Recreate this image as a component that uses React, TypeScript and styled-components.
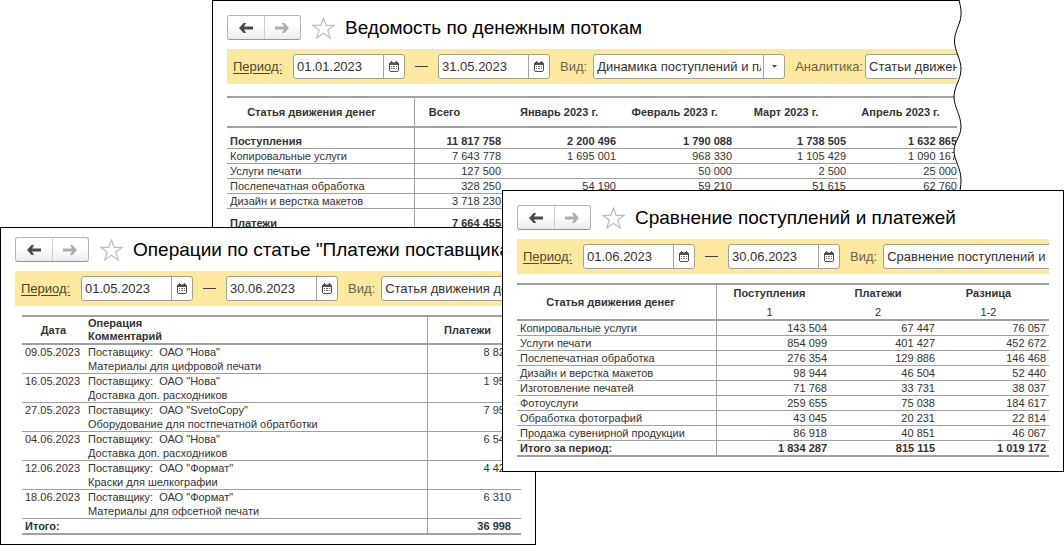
import React from "react";
import styled, { createGlobalStyle, css } from "styled-components";

const GlobalStyle = createGlobalStyle`
  *, *::before, *::after { box-sizing: border-box; }
  body {
    margin: 0;
    background: #fff;
    color: #333;
    font-family: "Liberation Sans", Arial, sans-serif;
    font-size: 11px;
  }
`;

const Desktop = styled.main`
  position: relative;
  min-height: 100vh;
  overflow: hidden;
`;

const Panel = styled.section<{ $compact?: boolean }>`
  position: absolute;
  background: #fff;
  border: 1px solid #000;
  padding: ${(p) => (p.$compact ? "9px 14px" : "14px")};
`;

const FlowPanel = styled(Panel)`
  top: 0;
  left: 212px;
  right: 103px;
  border-width: 1px 0 0 1px;
  padding-right: 4px;
`;

const OperationsPanel = styled(Panel)`
  top: 227px;
  left: 0;
  width: 536px;
`;

const ComparePanel = styled(Panel)`
  top: 190px;
  left: 502px;
  right: 0;
`;

const TornEdge = styled.svg`
  position: absolute;
  top: -1px;
  right: -1px;
`;

const TitleBar = styled.header`
  display: flex;
  align-items: center;
  height: 25px;
  margin-bottom: 9px;
  white-space: nowrap;
  overflow: hidden;
`;

const NavGroup = styled.div`
  display: flex;
  flex: none;
  width: 74px;
  height: 25px;
  border: 1px solid #b5b5b5;
  border-bottom-color: #959595;
  border-radius: 3px;
  background: linear-gradient(#fff 40%, #ececec);
`;

const NavButton = styled.button`
  display: flex;
  flex: 1;
  align-items: center;
  justify-content: center;
  padding: 0;
  border: 0;
  background: none;
  color: #4a4a4a;

  & + & {
    border-left: 1px solid #cfcfcf;
    color: #adadad;
  }
`;

const StarButton = styled.button`
  display: flex;
  flex: none;
  margin: 0 10px 0 11px;
  padding: 0;
  border: 0;
  background: none;
`;

const Title = styled.h1`
  margin: 0;
  color: #000;
  font-size: 19px;
  line-height: 25px;
  font-weight: 400;
`;

const FilterBar = styled.div<{ $gap: number }>`
  display: flex;
  align-items: center;
  gap: 10px;
  height: 35px;
  margin-bottom: ${(p) => p.$gap}px;
  padding-left: 6px;
  background: #fce99f;
  font-size: 13px;
  white-space: nowrap;
  overflow: hidden;
`;

const PeriodLink = styled.a`
  flex: none;
  width: 50px;
  color: #4d4632;
  text-decoration: underline;
  text-underline-offset: 2px;
`;

const FieldGroup = styled.div<{ $tight?: boolean }>`
  display: flex;
  flex: none;
  align-items: center;
  gap: ${(p) => (p.$tight ? 2 : 6)}px;
`;

const FieldLabel = styled.label`
  color: #6b6448;
`;

const Box = styled.div<{ $wide?: boolean }>`
  display: flex;
  flex: none;
  width: ${(p) => (p.$wide ? 192 : 112)}px;
  height: 25px;
  border: 1px solid #a3a08f;
  border-radius: 3px;
  background: #fff;
  overflow: hidden;
`;

const control = css`
  flex: 1;
  min-width: 0;
  padding: 0 0 0 3px;
  border: 0;
  outline: 0;
  background: none;
  color: #333;
  font: 13px "Liberation Sans", Arial, sans-serif;
`;

const DateInput = styled.input`
  ${control}
`;

const Select = styled.select`
  ${control}
  margin-right: 2px;
  appearance: none;
  text-overflow: clip;
`;

const BoxButton = styled.button`
  display: flex;
  flex: none;
  align-items: center;
  justify-content: center;
  width: 21px;
  padding: 0;
  border: 0;
  border-left: 1px solid #a3a3a3;
  background: none;
  color: #505050;
`;

const Dash = styled.span`
  flex: none;
  width: 13px;
  height: 1px;
  background: #444;
`;

const Table = styled.table`
  width: 100%;
  table-layout: fixed;
  border-collapse: separate;
  border-spacing: 0;
  border-top: 2px solid #a0a0a0;
  line-height: 14px;
  white-space: nowrap;
`;

const InsetTable = styled(Table)`
  width: calc(100% - 7px);
  margin-left: 7px;

  thead {
    line-height: 13px;
  }
`;

const Head = styled.th<{ $shift?: number; $left?: boolean; $rule?: boolean; $height?: number }>`
  height: ${(p) => p.$height ?? 28}px;
  padding: 0 ${(p) => p.$shift ?? 0}px 0 ${(p) => (p.$left ? 3 : 0)}px;
  border-bottom: 2px solid #a0a0a0;
  border-right: ${(p) => (p.$rule ? "1px solid #a0a0a0" : "0")};
  text-align: ${(p) => (p.$left ? "left" : "center")};
`;

const SubHead = styled.span`
  display: block;
  margin-top: 5px;
  font-weight: 400;
`;

const Row = styled.tr<{ $bold?: boolean; $last?: boolean; $space?: number }>`
  font-weight: ${(p) => (p.$bold ? 700 : 400)};

  td {
    padding-top: ${(p) => p.$space ?? 0}px;
    border-bottom: ${(p) => (p.$last ? 2 : 1)}px solid #a0a0a0;
  }
`;

const Cell = styled.td<{ $rule?: boolean }>`
  padding: 0 3px;
  vertical-align: top;
  border-right: ${(p) => (p.$rule ? "1px solid #a0a0a0" : "0")};
`;

const NumberCell = styled.td<{ $pad?: number }>`
  padding: 0 ${(p) => p.$pad ?? 3}px 0 0;
  vertical-align: top;
  text-align: right;
`;

const Supplier = styled.span`
  display: block;
  white-space: pre;
`;

function Arrow({ forward }: { forward?: boolean }) {
  return (
    <svg width="14" height="10" viewBox="0 0 14 10" aria-hidden="true">
      <path
        transform={forward ? "rotate(180 7 5)" : undefined}
        d="M0 5 4.600 0H7.200L5 3.600H14V6.400H5L7.200 10H4.600Z"
        fill="currentColor"
      />
    </svg>
  );
}

function Calendar() {
  return (
    <svg width="10" height="11" viewBox="0 0 10 11" aria-hidden="true">
      <path d="M1 1h8v1h1v8H9v1H1v-1H0V2h1Z" fill="currentColor" />
      <path d="M1 4h8v6H1Z" fill="#fff" />
      <path d="M2 0h1v2H2ZM7 0h1v2H7Z" fill="currentColor" />
      <path d="M4 1h2v1H4Z" fill="#fff" opacity=".5" />
      <path
        d="M2 5h1v1H2ZM4 5h2v1H4ZM7 5h1v1H7ZM2 7h1v1H2ZM4 7h2v1H4ZM7 7h1v1H7Z"
        fill="currentColor"
        opacity=".8"
      />
    </svg>
  );
}

function Heading({ children }: { children: React.ReactNode }) {
  return (
    <TitleBar>
      <NavGroup>
        <NavButton type="button" aria-label="Назад">
          <Arrow />
        </NavButton>
        <NavButton type="button" aria-label="Вперед">
          <Arrow forward />
        </NavButton>
      </NavGroup>
      <StarButton type="button" aria-label="В избранное">
        <svg width="23" height="22" viewBox="0 0 23 22" aria-hidden="true">
          <path
            d="M11.5 1 14.2 8.3H22.3L15.8 13 18.2 21 11.5 16.2 4.8 21 7.2 13 0.7 8.3H8.8Z"
            fill="#fff"
            stroke="#b9bec4"
            strokeWidth="1.2"
          />
        </svg>
      </StarButton>
      <Title>{children}</Title>
    </TitleBar>
  );
}

function DateField({ label, value }: { label: string; value: string }) {
  return (
    <Box>
      <DateInput type="text" aria-label={label} defaultValue={value} />
      <BoxButton type="button" aria-label="Выбрать дату">
        <Calendar />
      </BoxButton>
    </Box>
  );
}

interface SelectFieldProps {
  id: string;
  label: string;
  value: string;
  tight?: boolean;
}

function SelectField({ id, label, value, tight }: SelectFieldProps) {
  return (
    <FieldGroup $tight={tight}>
      <FieldLabel htmlFor={id}>{label}</FieldLabel>
      <Box $wide>
        <Select id={id} defaultValue={value}>
          <option>{value}</option>
        </Select>
        <BoxButton type="button" aria-label="Открыть список">
          <svg width="5" height="3" viewBox="0 0 5 3" aria-hidden="true">
            <path d="M0 0h5L2.5 3Z" fill="currentColor" />
          </svg>
        </BoxButton>
      </Box>
    </FieldGroup>
  );
}

interface FiltersProps {
  from: string;
  to: string;
  gap: number;
  children: React.ReactNode;
}

function Filters({ from, to, gap, children }: FiltersProps) {
  return (
    <FilterBar $gap={gap}>
      <PeriodLink href="#period">Период:</PeriodLink>
      <DateField label="Начало периода" value={from} />
      <Dash />
      <DateField label="Конец периода" value={to} />
      {children}
    </FilterBar>
  );
}

const flowColumns = [
  { title: "Всего", width: 89, shift: 30 },
  { title: "Январь 2023 г.", width: 115, shift: 5 },
  { title: "Февраль 2023 г.", width: 116, shift: 5 },
  { title: "Март 2023 г.", width: 114, shift: 12 },
  { title: "Апрель 2023 г.", width: undefined, shift: 5 },
];

const flowRows = [
  { name: "Поступления", space: 6, values: ["11 817 758", "2 200 496", "1 790 088", "1 738 505", "1 632 865"] },
  { name: "Копировальные услуги", values: ["7 643 778", "1 695 001", "968 330", "1 105 429", "1 090 167"] },
  { name: "Услуги печати", values: ["127 500", "", "50 000", "2 500", "25 000"] },
  { name: "Послепечатная обработка", values: ["328 250", "54 190", "59 210", "51 615", "62 760"] },
  { name: "Дизайн и верстка макетов", values: ["3 718 230", "", "", "", ""] },
  { name: "Платежи", space: 7, values: ["7 664 455", "", "", "", ""] },
];

const operations = [
  { date: "09.05.2023", supplier: 'ОАО "Нова"', comment: "Материалы для цифровой печати", sum: "8 820" },
  { date: "16.05.2023", supplier: 'ОАО "Нова"', comment: "Доставка доп. расходников", sum: "1 950" },
  { date: "27.05.2023", supplier: 'ОАО "SvetoCopy"', comment: "Оборудование для постпечатной обратботки", sum: "7 950" },
  { date: "04.06.2023", supplier: 'ОАО "Нова"', comment: "Доставка доп. расходников", sum: "6 540" },
  { date: "12.06.2023", supplier: 'ОАО "Формат"', comment: "Краски для шелкографии", sum: "4 420" },
  { date: "18.06.2023", supplier: 'ОАО "Формат"', comment: "Материалы для офсетной печати", sum: "6 310" },
];

const compareRows = [
  ["Копировальные услуги", "143 504", "67 447", "76 057"],
  ["Услуги печати", "854 099", "401 427", "452 672"],
  ["Послепечатная обработка", "276 354", "129 886", "146 468"],
  ["Дизайн и верстка макетов", "98 944", "46 504", "52 440"],
  ["Изготовление печатей", "71 768", "33 731", "38 037"],
  ["Фотоуслуги", "259 655", "75 038", "184 617"],
  ["Обработка фотографий", "43 045", "20 231", "22 814"],
  ["Продажа сувенирной продукции", "86 918", "40 851", "46 067"],
  ["Итого за период:", "1 834 287", "815 115", "1 019 172"],
];

const tornLine =
  "M7 0C9 8 10 14 8 21C6 28 2.500 33 2.500 41C2.500 51 9 59 9 69C9 80 2 86 2 97C2 107 9 115 9 127C9 136 2 142 2 151C2 160 9 168 9 180C9 186 8 192 6 198L3 230";

function CashFlow() {
  return (
    <FlowPanel>
      <Heading>Ведомость по денежным потокам</Heading>
      <Filters from="01.01.2023" to="31.05.2023" gap={12}>
        <SelectField id="flow-view" label="Вид:" value="Динамика поступлений и платежей" />
        <SelectField id="flow-analytics" label="Аналитика:" value="Статьи движения денег" tight />
      </Filters>
      <Table>
        <colgroup>
          <col width={188} />
          {flowColumns.map((c) => (
            <col key={c.title} width={c.width} />
          ))}
        </colgroup>
        <thead>
          <tr>
            <Head $rule $shift={18} $height={30}>Статья движения денег</Head>
            {flowColumns.map((c) => (
              <Head key={c.title} $shift={c.shift}>{c.title}</Head>
            ))}
          </tr>
        </thead>
        <tbody>
          {flowRows.map((r) => (
            <Row key={r.name} $bold={r.space !== undefined} $space={r.space}>
              <Cell $rule>{r.name}</Cell>
              {r.values.map((v, i) => (
                <NumberCell key={i} $pad={i === 4 ? 0 : 3}>{v}</NumberCell>
              ))}
            </Row>
          ))}
        </tbody>
      </Table>
      <TornEdge width="10" height="230" viewBox="0 0 10 230" aria-hidden="true">
        <path d={`${tornLine}H10V0Z`} fill="#fff" />
        <path d={tornLine} fill="none" stroke="#000" />
      </TornEdge>
    </FlowPanel>
  );
}

function Operations() {
  return (
    <OperationsPanel $compact>
      <Heading>Операции по статье "Платежи поставщикам"</Heading>
      <Filters from="01.05.2023" to="30.06.2023" gap={9}>
        <SelectField id="operations-view" label="Вид:" value="Статья движения денег" />
      </Filters>
      <InsetTable>
        <colgroup>
          <col width={63} />
          <col />
          <col width={93} />
        </colgroup>
        <thead>
          <tr>
            <Head>Дата</Head>
            <Head $left $rule>
              Операция
              <br />
              Комментарий
            </Head>
            <Head $shift={14}>Платежи</Head>
          </tr>
        </thead>
        <tbody>
          {operations.map((o) => (
            <Row key={o.date}>
              <Cell>{o.date}</Cell>
              <Cell $rule>
                <Supplier>{`Поставщику:  ${o.supplier}`}</Supplier>
                {o.comment}
              </Cell>
              <NumberCell $pad={10}>{o.sum}</NumberCell>
            </Row>
          ))}
          <Row $bold $last>
            <Cell>Итого:</Cell>
            <Cell $rule />
            <NumberCell $pad={10}>36 998</NumberCell>
          </Row>
        </tbody>
      </InsetTable>
    </OperationsPanel>
  );
}

function Compare() {
  return (
    <ComparePanel>
      <Heading>Сравнение поступлений и платежей</Heading>
      <Filters from="01.06.2023" to="30.06.2023" gap={9}>
        <SelectField id="compare-view" label="Вид:" value="Сравнение поступлений и платежей" />
      </Filters>
      <Table>
        <colgroup>
          <col width={200} />
          <col width={113} />
          <col width={108} />
          <col />
        </colgroup>
        <thead>
          <tr>
            <Head $rule $shift={12} $height={36}>Статья движения денег</Head>
            <Head $shift={8}>Поступления<SubHead>1</SubHead></Head>
            <Head $shift={12}>Платежи<SubHead>2</SubHead></Head>
            <Head $shift={10}>Разница<SubHead>1-2</SubHead></Head>
          </tr>
        </thead>
        <tbody>
          {compareRows.map(([name, ...values], index) => {
            const total = index === compareRows.length - 1;
            return (
              <Row key={name} $bold={total} $last={total}>
                <Cell $rule>{name}</Cell>
                {values.map((v, i) => (
                  <NumberCell key={i}>{v}</NumberCell>
                ))}
              </Row>
            );
          })}
        </tbody>
      </Table>
    </ComparePanel>
  );
}

export default function App() {
  return (
    <>
      <GlobalStyle />
      <Desktop>
        <CashFlow />
        <Operations />
        <Compare />
      </Desktop>
    </>
  );
}
